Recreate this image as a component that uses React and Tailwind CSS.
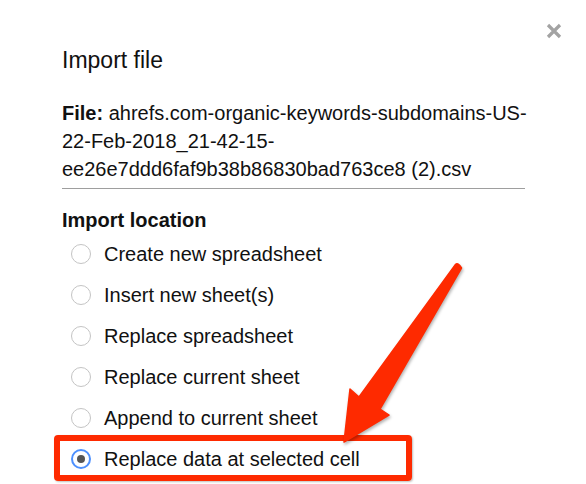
import React from "react";

function Radio({ checked }) {
  if (checked) {
    return (
      <div className="w-[20px] h-[20px] rounded-full border-[2px] border-[#4d90fe] flex items-center justify-center shrink-0">
        <div className="w-[8px] h-[8px] rounded-full bg-[#555]" />
      </div>
    );
  }
  return <div className="w-[20px] h-[20px] rounded-full border-[1.5px] border-[#c4c4c4] shrink-0" />;
}

const options = [
  "Create new spreadsheet",
  "Insert new sheet(s)",
  "Replace spreadsheet",
  "Replace current sheet",
  "Append to current sheet",
  "Replace data at selected cell",
];

export default function App() {
  return (
    <div
      className="relative w-[586px] h-[484px] bg-white overflow-hidden text-[#111]"
      style={{ fontFamily: '"Liberation Sans", Arial, sans-serif' }}
    >
      <svg
        className="absolute left-[546px] top-[23px]"
        width="16"
        height="16"
        viewBox="0 0 16 16"
      >
        <path d="M2 2 L14 14 M14 2 L2 14" stroke="#a3a3a3" strokeWidth="3.2" />
      </svg>

      <div className="pl-[62px] pt-[46px] w-[525px]">
        <div className="text-[23px] leading-[28px]">Import file</div>
        <div className="mt-[25px] text-[20px] leading-[28px] whitespace-nowrap">
          <div>
            <span className="font-bold">File:</span> ahrefs.com-organic-keywords-subdomains-US-
          </div>
          <div>22-Feb-2018_21-42-15-</div>
          <div>ee26e7ddd6faf9b38b86830bad763ce8 (2).csv</div>
        </div>
        <div className="mt-[5px] h-px bg-[#9e9e9e]" />
        <div className="mt-[18px] text-[20px] leading-[26px] font-bold">Import location</div>
        <div className="flex flex-col">
          {options.map((o, i) => (
            <div key={o} className="h-[41px] flex items-center pl-[9px] gap-[13px] text-[20px]">
              <Radio checked={i === 5} />
              <span>{o}</span>
            </div>
          ))}
        </div>
      </div>

      <div className="absolute left-[54px] top-[435px] w-[358px] h-[46px] border-[6px] border-[#fe2a00] rounded-[4px] shadow-[1px_1px_2px_rgba(0,0,0,0.25)]" />

      <svg
        className="absolute left-0 top-0 pointer-events-none"
        width="586"
        height="484"
        viewBox="0 0 586 484"
        style={{ filter: "drop-shadow(1px 2px 1.5px rgba(0,0,0,0.3))" }}
      >
        <path
          d="M455.5 264.5 Q458 262 461.5 268 L380 409 L389 415 L344 442 L350 389 L359 397 Z"
          fill="#fe2a00"
          stroke="#fe2a00"
          strokeWidth="1.5"
          strokeLinejoin="round"
        />
      </svg>
    </div>
  );
}
